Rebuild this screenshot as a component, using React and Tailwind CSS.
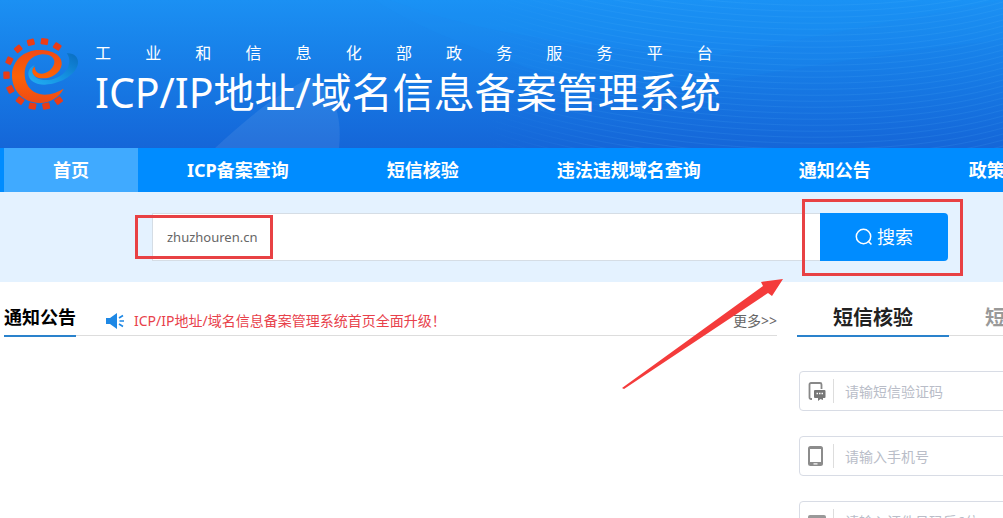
import { useState } from 'react';
import clsx from 'clsx';

const navItems = ['首页', 'ICP备案查询', '短信核验', '违法违规域名查询', '通知公告', '政策文件'];

const tabs = ['短信核验', '短信查询'];

// angle of every tooth around the gear
const teeth = [-57, -81, -105, -130, -156, 178, 152, 126, 102, 78, 54];

const waveLines = Array.from({ length: 44 }, (_, i) => i * 6);

const Logo = () => (
  <svg className="size-20 shrink-0" viewBox="0 0 240 240" aria-hidden="true">
    <defs>
      <linearGradient id="gear" x1="0" y1="0" x2="0" y2="1">
        <stop offset="0" stopColor="#f04a14" />
        <stop offset="0.5" stopColor="#fb6206" />
        <stop offset="1" stopColor="#f04a14" />
      </linearGradient>
      <linearGradient id="swoosh" x1="0" y1="1" x2="1" y2="0">
        <stop offset="0" stopColor="#22b0f4" />
        <stop offset="0.5" stopColor="#1490e0" />
        <stop offset="1" stopColor="#0a6cc0" />
      </linearGradient>
    </defs>
    {teeth.map((angle) => (
      <rect
        key={angle}
        x="89"
        y="-11"
        width="19"
        height="22"
        rx="3"
        fill="#ea3c16"
        transform={`translate(118 120) rotate(${angle})`}
      />
    ))}
    <path
      d="M200 58C220 56 236 68 234 88C230 118 188 150 134 152C106 152 86 140 85 120C85 108 92 98 104 93C95 106 97 124 110 132C136 146 182 136 202 104C212 86 208 66 200 58Z"
      fill="url(#swoosh)"
    />
    <path
      d="M191 164C178 190 148 208 118 207C70 205 35 170 36 122C37 80 72 48 118 48C160 48 188 66 185 92C182 116 154 134 126 133C108 132 96 122 97 110C97 104 100 100 105 98C104 110 112 119 124 119C142 118 160 104 163 86C165 70 148 60 126 61C94 63 72 90 74 124C76 160 102 182 134 182C156 181 174 174 191 164Z"
      fill="url(#gear)"
    />
  </svg>
);

const HeaderWaves = () => (
  <svg
    className="absolute inset-0 size-full"
    viewBox="0 0 1003 148"
    preserveAspectRatio="none"
    aria-hidden="true"
  >
    <defs>
      <linearGradient id="fade" x1="480" y1="0" x2="1003" y2="0" gradientUnits="userSpaceOnUse">
        <stop offset="0" stopColor="#5fc0ff" stopOpacity="0" />
        <stop offset="0.3" stopColor="#5fc0ff" stopOpacity="0.12" />
        <stop offset="1" stopColor="#5fc0ff" stopOpacity="0.12" />
      </linearGradient>
    </defs>
    <path d="M215 148C245 120 275 95 310 78C330 85 343 110 339 148Z" fill="#fff" opacity="0.08" />
    <path d="M375 0C420 30 480 50 560 80C640 108 800 60 1003 40V0Z" fill="#19a0ff" opacity="0.1" />
    <path d="M390 0C480 35 600 50 720 55L1003 0Z" fill="#19a0ff" opacity="0.12" />
    {waveLines.map((y) => (
      <path
        key={y}
        d={`M480 ${y - 100}C620 ${y - 50} 860 ${y - 30} 1003 ${y - 70}`}
        fill="none"
        stroke="url(#fade)"
      />
    ))}
  </svg>
);

const Speaker = () => (
  <svg className="h-4 w-[18px]" viewBox="0 0 18 16" aria-hidden="true">
    <path d="M0 5h4l7-5v16l-7-5H0z" fill="#1e88e5" />
    <path d="M13 5l4-2.500M13.500 8H18M13 11l4 2.500" stroke="#1e88e5" strokeWidth="1.600" />
  </svg>
);

const SearchIcon = () => (
  <svg className="size-[18px]" viewBox="0 0 18 18" fill="none" stroke="currentColor" strokeWidth="1.500" aria-hidden="true">
    <circle cx="8.500" cy="8.500" r="7.200" />
    <path d="M13 13l3.500 3.500" />
  </svg>
);

const SmsIcon = () => (
  <svg className="h-5 w-[18px]" viewBox="0 0 18 20" aria-hidden="true">
    <path d="M4 18H3a1.500 1.500 0 0 1-1.500-1.500v-13A1.500 1.500 0 0 1 3 2h9a1.500 1.500 0 0 1 1.500 1.500V8" fill="none" stroke="#888" strokeWidth="1.800" />
    <path d="M7 9h9.500a1 1 0 0 1 1 1v6a1 1 0 0 1-1 1H15v2l-2.500-1L10 20v-3H7a1 1 0 0 1-1-1v-6a1 1 0 0 1 1-1z" fill="#777" />
    <path d="M8.500 12.500h1.500M11 12.500h1.500M13.500 12.500H15" stroke="#fff" strokeWidth="1.500" />
  </svg>
);

const PhoneIcon = () => (
  <svg className="h-5 w-[18px]" viewBox="0 0 18 20" aria-hidden="true">
    <rect x="0" y="0" width="15" height="20" rx="2.500" fill="#8c8c8c" />
    <rect x="2" y="3" width="11" height="13" fill="#fff" />
    <rect x="5.500" y="17.300" width="4" height="1.200" fill="#fff" />
  </svg>
);

const CardIcon = () => (
  <svg className="h-5 w-[18px]" viewBox="0 0 18 20" aria-hidden="true">
    <rect x="0" y="4" width="18" height="13" rx="2" fill="#999" />
    <path d="M3 11h6M3 14h6" stroke="#fff" />
  </svg>
);

const fields = [
  { id: 'code', placeholder: '请输短信验证码', Icon: SmsIcon },
  { id: 'mobile', placeholder: '请输入手机号', Icon: PhoneIcon },
  { id: 'card', placeholder: '请输入证件号码后6位', Icon: CardIcon },
];

const Header = () => (
  <header className="relative flex h-[148px] items-center bg-linear-to-b from-[#1b90f3] to-[#1566d8]">
    <HeaderWaves />
    <div className="relative flex items-center gap-[15px] text-white">
      <Logo />
      <div className="w-fit whitespace-nowrap pt-3">
        <p className="pr-2 text-base leading-6 [text-align-last:justify]">工业和信息化部政务服务平台</p>
        <h1 className="text-[41px] leading-[54px]">ICP/IP地址/域名信息备案管理系统</h1>
      </div>
    </div>
  </header>
);

const Nav = () => (
  <nav className="flex h-11 bg-[#008cff] pl-1">
    {navItems.map((item, i) => (
      <a
        key={item}
        href="#"
        className={clsx(
          'shrink-0 whitespace-nowrap px-[49px] text-lg leading-11 font-bold text-white',
          i === 0 && 'bg-[#40aaff]'
        )}
      >
        {item}
      </a>
    ))}
  </nav>
);

const Search = () => {
  const [keyword, setKeyword] = useState('zhuzhouren.cn');

  return (
    <section className="bg-[#e4f2ff] py-5">
      <form className="flex h-[50px] items-center pr-[55px] pl-[152px]" onSubmit={(e) => e.preventDefault()}>
        <div className="relative flex-1">
          <input
            type="text"
            aria-label="域名"
            value={keyword}
            onChange={(e) => setKeyword(e.target.value)}
            className="block h-12 w-full border border-r-0 border-[#d5dde5] bg-white px-[14px] text-[13px] text-[#666] outline-none"
          />
          <span className="pointer-events-none absolute top-0.5 -left-[17px] h-11 w-[138px] border-3 border-[#e84144]" />
        </div>
        <div className="relative">
          <button
            type="submit"
            className="flex h-12 w-32 items-center justify-center gap-1 rounded-r bg-[#008cff] text-lg text-white"
          >
            <SearchIcon />
            搜索
          </button>
          <span className="pointer-events-none absolute -top-[14px] -left-[18px] h-[77px] w-[161px] border-3 border-[#e84144]" />
        </div>
      </form>
    </section>
  );
};

const Notices = () => (
  <section className="min-w-0 flex-1">
    <div className="flex h-9 items-end border-b border-[#ddd]">
      <h2 className="-mb-0.5 h-9 border-b-2 border-[#2a82cc] text-lg leading-8 font-bold text-black">通知公告</h2>
      <a href="#" className="ml-[30px] flex items-center gap-[10px] text-sm leading-7 text-[#e8414b]">
        <Speaker />
        ICP/IP地址/域名信息备案管理系统首页全面升级！
      </a>
      <a href="#" className="ml-auto text-sm leading-7 text-[#666]">更多&gt;&gt;</a>
    </div>
  </section>
);

const SmsPanel = () => {
  const [active, setActive] = useState(0);

  return (
    <section className="w-[206px] shrink-0 overflow-hidden">
      <div className="w-96">
        <div className="flex h-[37px]">
          {tabs.map((tab, i) => (
            <button
              key={tab}
              type="button"
              onClick={() => setActive(i)}
              className={clsx(
                'px-9 text-xl font-bold whitespace-nowrap',
                i === active ? 'border-b-2 border-[#2a82cc] text-[#222]' : 'mb-px border-b border-[#ddd] text-[#999]'
              )}
            >
              {tab}
            </button>
          ))}
        </div>
        <div className="flex flex-col gap-[25px] pt-[34px] pl-0.5">
          {fields.map(({ id, placeholder, Icon }) => (
            <label key={id} htmlFor={id} className="flex h-10 items-center rounded-sm border border-[#d8dce5] pl-2">
              <Icon />
              <input
                id={id}
                type="text"
                placeholder={placeholder}
                className="ml-[7px] h-6 flex-1 border-l border-[#ddd] pl-[11px] text-sm outline-none placeholder:text-[#b9bdc8]"
              />
            </label>
          ))}
        </div>
      </div>
    </section>
  );
};

export default function App() {
  return (
    <div className="relative h-screen overflow-hidden bg-white font-['Noto_Sans','Noto_Sans_CJK_SC',sans-serif]">
      <Header />
      <Nav />
      <Search />
      <main className="flex gap-5 pt-[18px] pl-1">
        <Notices />
        <SmsPanel />
      </main>
      <svg
        className="pointer-events-none absolute top-[278px] right-[219px] h-28 w-[163px]"
        viewBox="0 0 163 112"
        aria-hidden="true"
      >
        <path d="M1 110L142 8L140 4L162 1L151 18L147 15L3 111Z" fill="#f43b3b" />
      </svg>
    </div>
  );
}
